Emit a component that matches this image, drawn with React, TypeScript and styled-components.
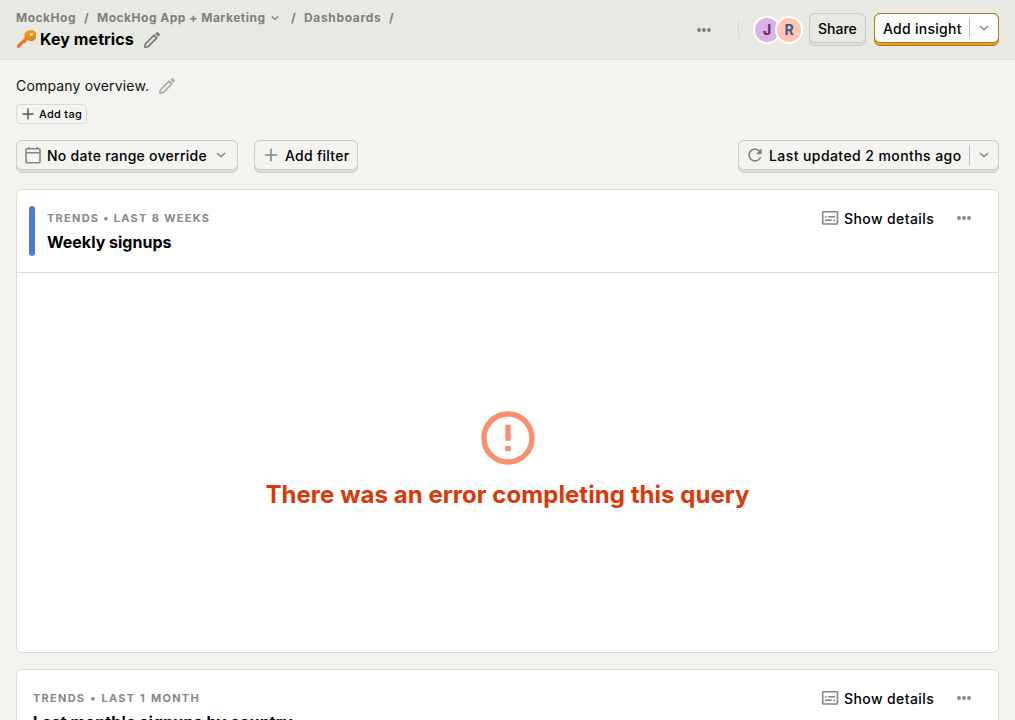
import React from 'react';
import styled, { createGlobalStyle } from 'styled-components';

const Global = createGlobalStyle`
  * { box-sizing: border-box; }
  body { margin: 0; background: #f3f4ef; color: #111; font-family: Inter, "Liberation Sans", sans-serif; font-size: 14px; line-height: 20px; overflow: hidden; }
  svg { display: block; flex: none; }
`;
const Page = styled.div`height: 100vh; overflow: hidden;`;
const TopBar = styled.header`
  height: 60px; background: #e8e9e3; border-bottom: 1px solid #dfe0da; display: flex; justify-content: space-between; padding: 0 16px;
`;
const Titles = styled.div`display: flex; flex-direction: column; padding-top: 9px;`;
const Crumbs = styled.nav`
  display: flex; align-items: center; height: 18px; color: #7f807b; font-size: 12px; font-weight: 700; line-height: 18px; white-space: nowrap;
`;
const Crumb = styled.span<{ $w: number; $ls?: number }>`
  display: flex; align-items: center; gap: 3px; width: ${p => p.$w}px; letter-spacing: ${p => p.$ls ?? 0.5}px;
`;
const Slash = styled.span`width: 13px;`;
const TitleRow = styled.div`
  display: flex; align-items: center; height: 24px; color: #7a7b76;
  > svg { margin-top: 2px; }
`;
const Title = styled.h1`
  display: flex; align-items: center; gap: 4px; width: 126px; margin: 0; font-size: 16px; line-height: 24px; font-weight: 700; letter-spacing: 0.08px; color: #000; white-space: nowrap;
`;
const Actions = styled.div`display: flex; align-items: flex-start; padding-top: 13px;`;
const MoreSlot = styled.span`display: flex; padding-top: 9px; color: #7a7b76;`;
const Rule = styled.span`width: 1px; height: 17px; margin: 8px 14px 0 26px; background: #d5d6d0;`;
const Avatars = styled.div`display: flex; margin: 3px 6px 0 0;`;
const Avatar = styled.span<{ $bg: string; $fg: string }>`
  width: 28px; height: 28px; border: 2px solid #fff; border-radius: 50%; display: flex; align-items: center; justify-content: center;
  font-size: 14px; font-weight: 700; background: ${p => p.$bg}; color: ${p => p.$fg};
  & + & { margin-left: -6px; }
`;
const Frame = styled.button<{ $w: number; $primary?: boolean }>`
  display: block; width: ${p => p.$w}px; height: 33px; padding: 0; border-radius: 6px; font: inherit; font-weight: 500; color: #000; text-align: left;
  border: 1px solid ${p => (p.$primary ? '#b17816' : '#ccc')};
  background: ${p => (p.$primary ? '#eb9d2a' : '#dedddd')};
`;
const Face = styled.span<{ $bg: string; $edge: string; $pad?: string }>`
  display: flex; align-items: center; height: 30px; margin: -1px -1px 2px; padding: 0 ${p => p.$pad ?? '7px'}; border: 1px solid ${p => p.$edge}; border-radius: 6px;
  background: ${p => p.$bg}; white-space: nowrap;
`;
const Icon = styled.span`display: flex; margin-bottom: 1px; color: #858582;`;
const Label = styled.span<{ $ml?: number; $ls?: number }>`
  margin-left: ${p => p.$ml ?? 0}px; padding-top: 2px; letter-spacing: ${p => p.$ls ?? 0.27}px;
`;
const Split = styled.span`width: 1px; height: 20px; margin: 0 5px 0 auto; background: #bbb;`;
const Primary = styled.div`margin-left: 8px;`;
const Main = styled.main`padding: 16px 16px 0; display: flex; flex-direction: column;`;
const Description = styled.div`
  display: flex; align-items: center; height: 20px; gap: 8px; color: #adaeaa;
  span { color: #111; letter-spacing: 0.17px; }
`;
const Tag = styled.button`
  display: flex; align-items: center; gap: 3px; width: 71px; height: 20px; margin: 8px 0 16px; padding: 0 0 0 3px; border: 1px solid #dadbd4; border-radius: 4px;
  background: transparent; font: 500 11px/16px Inter, sans-serif; letter-spacing: 0.28px; color: #000; white-space: nowrap;
  svg { color: #555; }
`;
const Filters = styled.div`display: flex; gap: 16px; height: 33px; margin-bottom: 16px;`;
const Push = styled.div`margin-left: auto;`;
const Card = styled.section`
  height: 464px; margin-bottom: 16px; background: #fff; border: 1px solid #dadbd2; border-radius: 6px; display: flex; flex-direction: column; flex: none;
`;
const CardHead = styled.div<{ $ribbon?: boolean }>`
  display: flex; height: 83px; padding: 16px 26px 0 ${p => (p.$ribbon ? 12 : 16)}px; border-bottom: 1px solid #dadbd2;
`;
const Ribbon = styled.span`width: 6px; height: 50px; margin-right: 12px; border-radius: 3px; background: #527bd2;`;
const Meta = styled.div`flex: 1; padding-top: 4px;`;
const Kicker = styled.div<{ $words: number }>`
  font-size: 11px; line-height: 16px; font-weight: 700; letter-spacing: 1.25px; word-spacing: ${p => p.$words}px; color: #888; white-space: nowrap;
`;
const CardTitle = styled.h2<{ $ls?: number }>`
  margin: 4px 0 0; font-size: 16px; line-height: 24px; font-weight: 700; letter-spacing: ${p => p.$ls ?? 0}px; color: #000; white-space: nowrap;
`;
const CardActions = styled.div`
  display: flex; align-items: center; height: 24px; color: #858585; font-weight: 500;
  span { margin: 2px 21px 0 5px; color: #000; width: 91px; letter-spacing: 0.4px; white-space: nowrap; }
`;
const ErrorBody = styled.div`flex: 1; display: flex; flex-direction: column; align-items: center; padding-top: 133px;`;
const ErrorText = styled.h2`margin: 9px 0 0; font-size: 24px; line-height: 32px; font-weight: 700; letter-spacing: 0.05px; color: #db3707; white-space: nowrap;`;

const Reload = () => (
  <svg width="20" height="20" viewBox="0 0 24 24" fill="currentColor"><path d="M17.65 6.35A7.958 7.958 0 0 0 12 4c-4.42 0-7.99 3.58-7.99 8s3.57 8 7.99 8c3.73 0 6.84-2.55 7.73-6h-2.08A5.99 5.99 0 0 1 12 18c-3.31 0-6-2.69-6-6s2.69-6 6-6c1.66 0 3.14.69 4.22 1.78L13 11h7V4l-2.35 2.35z" /></svg>
);
const Pencil = () => (
  <svg width="20" height="20" viewBox="0 0 20 20">
    <path d="M2.8 17.2l.6-3.3 8.7-8.7 2.7 2.7-8.7 8.7z" fill="none" stroke="currentColor" strokeWidth="1.7" strokeLinejoin="round" />
    <path d="M13.3 3.7l1.2-1.2a1.2 1.2 0 0 1 1.7 0l1.3 1.3a1.2 1.2 0 0 1 0 1.7l-1.2 1.2z" fill="currentColor" />
  </svg>
);
const Key = () => (
  <svg width="20" height="20" viewBox="0 0 20 20">
    <defs><linearGradient id="key" x1="0" y1="0" x2="0" y2="1"><stop offset="0" stopColor="#f99c0b" /><stop offset="1" stopColor="#dd6b1c" /></linearGradient></defs>
    <path fill="url(#key)" fillRule="evenodd" d="M13.8 1.2a5.5 5.5 0 0 0-5 7.7L1.3 15.9 1 18.7l3-.2.5-1.9 1.8-.2.4-1.9 1.8-.2 3.4-3.2A5.5 5.5 0 1 0 13.8 1.2zm1.4 2.6a1.6 1.6 0 1 1 0 3.2 1.6 1.6 0 0 1 0-3.2z" />
  </svg>
);
const Dots = () => (
  <svg width="16" height="16" viewBox="0 0 16 16" fill="currentColor"><circle cx="3" cy="8" r="1.9" /><circle cx="8" cy="8" r="1.9" /><circle cx="13" cy="8" r="1.9" /></svg>
);
const Chevron = ({ size = 18 }: { size?: number }) => (
  <svg width={size} height={size} viewBox="0 0 18 18" fill="none" stroke="currentColor" strokeWidth={size < 16 ? 1.8 : 1.4}><path d="M5 7l4 3.8L13 7" /></svg>
);
const Plus = ({ size = 18 }: { size?: number }) => (
  <svg width={size} height={size} viewBox="0 0 18 18" fill="none" stroke="currentColor" strokeWidth="1.6"><path d="M9 2.8v12.4M2.8 9h12.4" /></svg>
);
const Calendar = () => (
  <svg width="18" height="18" viewBox="0 0 18 18" fill="none" stroke="currentColor" strokeWidth="1.6">
    <rect x="2" y="2.8" width="14" height="14" rx="1" /><path d="M2 6.8h14M4.7 1v2M13.3 1v2" />
  </svg>
);
const Details = () => (
  <svg width="18" height="18" viewBox="0 0 18 18" fill="none" stroke="currentColor" strokeWidth="1.6">
    <rect x="1.7" y="2.8" width="14.8" height="12.2" rx=".6" /><path d="M4 7.7h1.6M7 7.7h7M4 11.2h6.8M12.4 11.2H14" strokeWidth="1.4" />
  </svg>
);

interface ChartCardProps { kicker: string; title: string; words: number; ribbon?: boolean; spacing?: number; children?: React.ReactNode }
function ChartCard({ kicker, title, words, ribbon, spacing, children }: ChartCardProps) {
  return (
    <Card>
      <CardHead $ribbon={ribbon}>
        {ribbon && <Ribbon />}
        <Meta><Kicker $words={words}>{kicker}</Kicker><CardTitle $ls={spacing}>{title}</CardTitle></Meta>
        <CardActions><Details /><span>Show details</span><Dots /></CardActions>
      </CardHead>
      {children}
    </Card>
  );
}

export default function App() {
  return (
    <Page>
      <Global />
      <TopBar>
        <Titles>
          <Crumbs>
            <Crumb $w={68}>MockHog</Crumb><Slash>/</Slash>
            <Crumb $w={194}>MockHog App + Marketing <Chevron size={14} /></Crumb><Slash>/</Slash>
            <Crumb $w={85} $ls={0.66}>Dashboards</Crumb><Slash>/</Slash>
          </Crumbs>
          <TitleRow><Title><Key />Key metrics</Title><Pencil /></TitleRow>
        </Titles>
        <Actions>
          <MoreSlot><Dots /></MoreSlot>
          <Rule />
          <Avatars><Avatar $bg="#dcb1e3" $fg="#572e5e">J</Avatar><Avatar $bg="#ffc4b2" $fg="#41578c">R</Avatar></Avatars>
          <Frame $w={57}><Face $bg="#e8e9e3" $edge="#ccc" $pad="8px"><Label $ls={0}>Share</Label></Face></Frame>
          <Primary>
            <Frame $w={125} $primary>
              <Face $bg="#fff" $edge="#b17816" $pad="5px 0 8px"><Label>Add insight</Label><Split /><Icon><Chevron /></Icon></Face>
            </Frame>
          </Primary>
        </Actions>
      </TopBar>
      <Main>
        <Description><span>Company overview.</span><Pencil /></Description>
        <Tag><Plus size={16} />Add tag</Tag>
        <Filters>
          <Frame $w={222}>
            <Face $bg="#f3f4ef" $edge="#ccc"><Icon><Calendar /></Icon><Label $ml={5}>No date range override</Label><Push><Icon><Chevron /></Icon></Push></Face>
          </Frame>
          <Frame $w={104}>
            <Face $bg="#f3f4ef" $edge="#ccc"><Icon><Plus /></Icon><Label $ml={5}>Add filter</Label></Face>
          </Frame>
          <Push>
            <Frame $w={261}>
              <Face $bg="#f3f4ef" $edge="#ccc" $pad="5px 0 6px">
                <Icon><Reload /></Icon>
                <Label $ml={4} $ls={0.42}>Last updated 2 months ago</Label><Split /><Icon><Chevron /></Icon>
              </Face>
            </Frame>
          </Push>
        </Filters>
        <ChartCard ribbon kicker="TRENDS • LAST 8 WEEKS" title="Weekly signups" words={0.2}>
          <ErrorBody>
            <svg width="64" height="64" viewBox="0 0 24 24" fill="#fc8d6d"><path d="M11 15h2v2h-2v-2zm0-8h2v6h-2V7zm.99-5C6.47 2 2 6.48 2 12s4.47 10 9.99 10C17.52 22 22 17.52 22 12S17.52 2 11.99 2zM12 20c-4.42 0-8-3.58-8-8s3.58-8 8-8 8 3.58 8 8-3.58 8-8 8z" /></svg>
            <ErrorText>There was an error completing this query</ErrorText>
          </ErrorBody>
        </ChartCard>
        <ChartCard kicker="TRENDS • LAST 1 MONTH" title="Last month's signups by country" words={1} spacing={0.12} />
      </Main>
    </Page>
  );
}
